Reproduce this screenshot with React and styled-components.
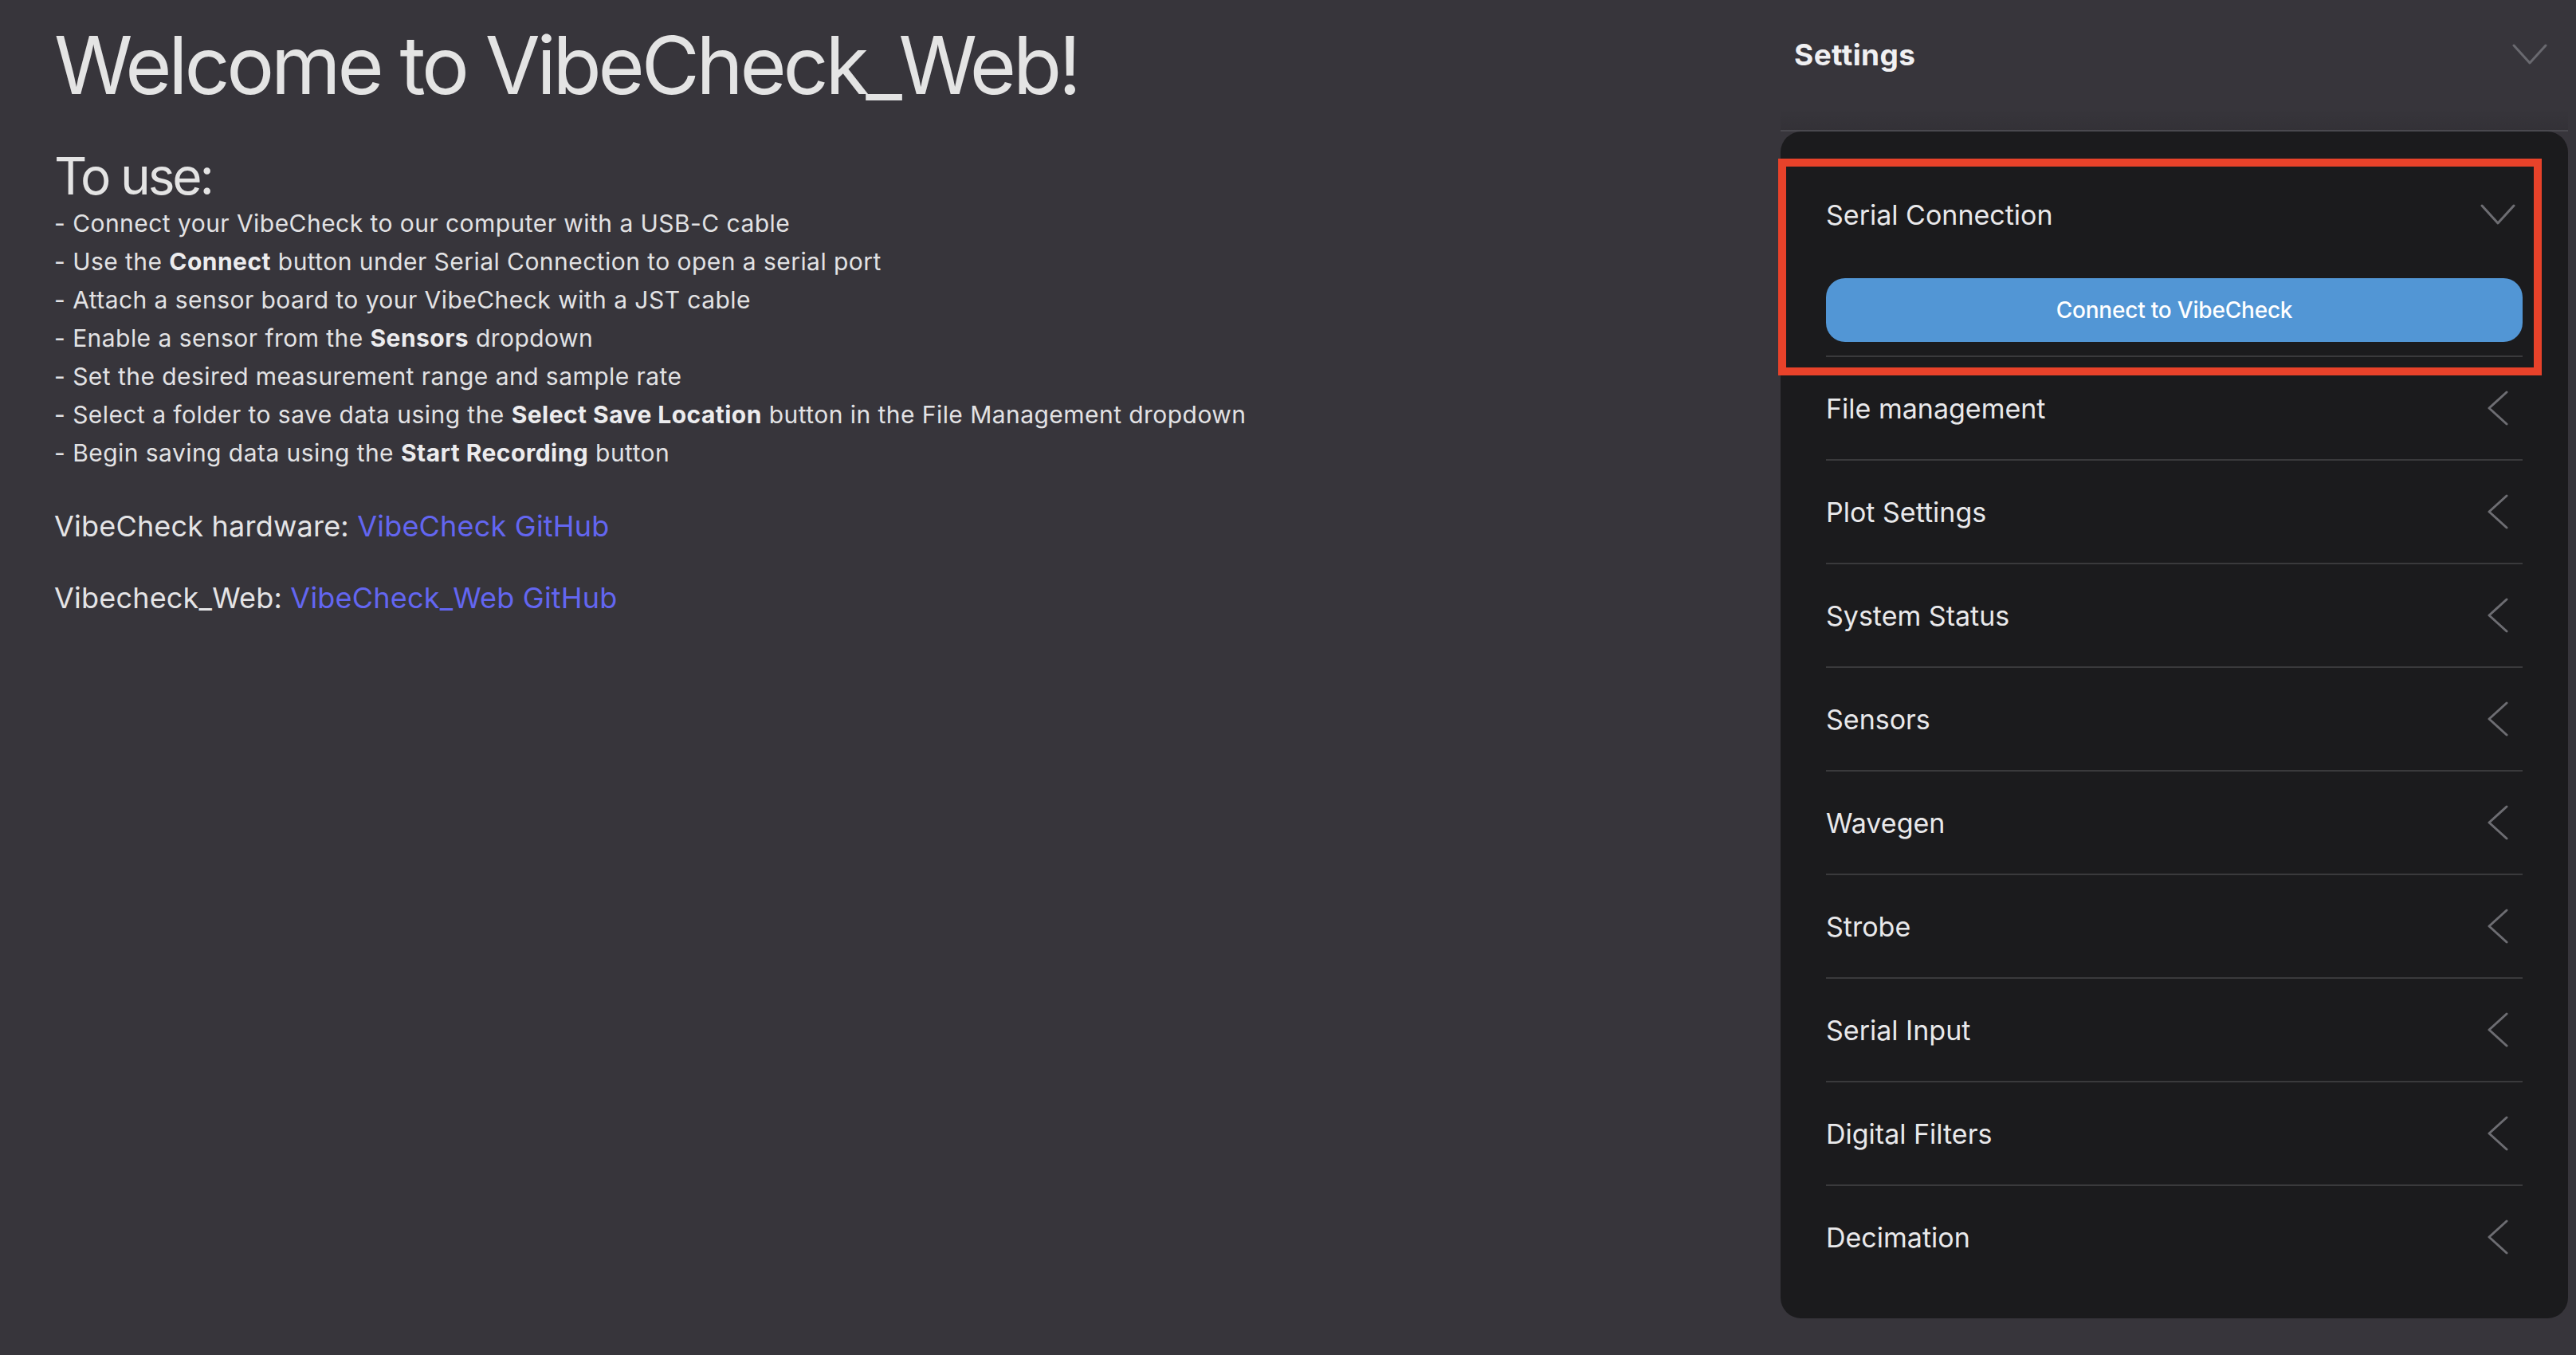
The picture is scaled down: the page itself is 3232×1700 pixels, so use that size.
import React from "react";
import styled, { createGlobalStyle } from "styled-components";

const GlobalStyle = createGlobalStyle`
  html, body {
    margin: 0;
    padding: 0;
    background: #37353b;
  }
  body {
    font-family: Inter, "Noto Sans", sans-serif;
    color: #e4e4e6;
  }
`;

const Page = styled.div`
  display: flex;
  width: 3232px;
  height: 1700px;
  box-sizing: border-box;
  padding-right: 10px;
  overflow: hidden;
`;

const Main = styled.main`
  flex: 1;
  display: flex;
  flex-direction: column;
  padding-left: 68px;
`;

const Title = styled.h1`
  margin: 22px 0 0;
  font-size: 100px;
  line-height: 120px;
  font-weight: 400;
  letter-spacing: -4.2px;
  color: #e4e4e4;
`;

const Subtitle = styled.h2`
  margin: 44px 0 0;
  font-size: 64px;
  line-height: 70px;
  font-weight: 400;
  letter-spacing: -3.2px;
  color: #e4e4e4;
`;

const Steps = styled.div`
  display: flex;
  flex-direction: column;
`;

const Step = styled.div`
  font-size: 30px;
  line-height: 48px;
  letter-spacing: 0.45px;
  color: #e2e2e4;

  b {
    font-weight: 700;
    color: #ececee;
  }
`;

const LinkLine = styled.p`
  margin: ${({ $first }) => ($first ? "41px" : "36px")} 0 0;
  font-size: 36px;
  line-height: 54px;
  letter-spacing: 0.2px;
  color: #e4e4e6;
`;

const Link = styled.a`
  color: #6366f1;
  text-decoration: none;
`;

const Sidebar = styled.aside`
  width: 988px;
  display: flex;
  flex-direction: column;
`;

const Header = styled.div`
  display: flex;
  flex-direction: column;
  border-bottom: 2px solid #4a494f;
`;

const Toolbar = styled.div`
  height: 136px;
  display: flex;
  align-items: center;
  justify-content: space-between;
  padding: 0 26px 0 17px;
`;

const ToolbarTitle = styled.span`
  font-size: 37px;
  font-weight: 700;
  letter-spacing: 0.4px;
  color: #f0f0f2;
`;

const Fade = styled.div`
  height: 27px;
  background: linear-gradient(to bottom, rgba(0, 0, 0, 0), rgba(0, 0, 0, 0.07));
`;

const Panel = styled.div`
  position: relative;
  display: flex;
  flex-direction: column;
  background: #1b1b1d;
  border-radius: 26px;
  padding: 40px 57px 38px;
`;

const Highlight = styled.div`
  position: absolute;
  left: -3px;
  top: 34px;
  width: 958px;
  height: 272px;
  box-sizing: border-box;
  border: 10px solid #e8422a;
  pointer-events: none;
`;

const Row = styled.div`
  height: 128px;
  display: flex;
  align-items: center;
  justify-content: space-between;
  padding-right: 9px;
  border-bottom: ${({ $divider }) => ($divider ? "2px solid #3a3a3c" : "none")};
`;

const Label = styled.span`
  font-size: 34px;
  color: #e9e9eb;
`;

const IconBox = styled.span`
  width: 44px;
  height: 44px;
  display: flex;
  align-items: center;
  justify-content: center;
`;

const Section = styled.div`
  display: flex;
  flex-direction: column;
`;

const SectionBody = styled.div`
  padding: 16px 0 17px;
  border-bottom: 2px solid #3a3a3c;
`;

const Button = styled.button`
  width: 100%;
  height: 80px;
  border: none;
  border-radius: 24px;
  background: #5296d5;
  color: #ffffff;
  font-family: Inter, "Noto Sans", sans-serif;
  font-size: 28px;
  font-weight: 500;
  letter-spacing: -0.2px;
`;

const ChevronDown = ({ color = "#6d6d72" }) => (
  <IconBox>
    <svg width="44" height="44" viewBox="0 0 44 44" fill="none">
      <polyline
        points="2,11 22,33 42,11"
        stroke={color}
        strokeWidth="3"
        strokeLinecap="round"
        strokeLinejoin="round"
      />
    </svg>
  </IconBox>
);

const ChevronBack = () => (
  <IconBox>
    <svg width="44" height="44" viewBox="0 0 44 44" fill="none">
      <polyline
        points="33,2 11,22 33,42"
        stroke="#6d6d72"
        strokeWidth="3"
        strokeLinecap="round"
        strokeLinejoin="round"
      />
    </svg>
  </IconBox>
);

const sections = [
  "File management",
  "Plot Settings",
  "System Status",
  "Sensors",
  "Wavegen",
  "Strobe",
  "Serial Input",
  "Digital Filters",
  "Decimation",
];

const App = () => {
  return (
    <>
      <GlobalStyle />
      <Page>
        <Main>
          <Title>Welcome to VibeCheck_Web!</Title>
          <Subtitle>To use:</Subtitle>
          <Steps>
            <Step>- Connect your VibeCheck to our computer with a USB-C cable</Step>
            <Step>
              - Use the <b>Connect</b> button under Serial Connection to open a serial port
            </Step>
            <Step>- Attach a sensor board to your VibeCheck with a JST cable</Step>
            <Step>
              - Enable a sensor from the <b>Sensors</b> dropdown
            </Step>
            <Step>- Set the desired measurement range and sample rate</Step>
            <Step>
              - Select a folder to save data using the <b>Select Save Location</b> button in the File
              Management dropdown
            </Step>
            <Step>
              - Begin saving data using the <b>Start Recording</b> button
            </Step>
          </Steps>
          <LinkLine $first>
            VibeCheck hardware: <Link href="#">VibeCheck GitHub</Link>
          </LinkLine>
          <LinkLine>
            Vibecheck_Web: <Link href="#">VibeCheck_Web GitHub</Link>
          </LinkLine>
        </Main>

        <Sidebar>
          <Header>
            <Toolbar>
              <ToolbarTitle>Settings</ToolbarTitle>
              <ChevronDown color="#69696f" />
            </Toolbar>
            <Fade />
          </Header>
          <Panel>
            <Section>
              <Row>
                <Label>Serial Connection</Label>
                <ChevronDown />
              </Row>
              <SectionBody>
                <Button>Connect to VibeCheck</Button>
              </SectionBody>
            </Section>
            {sections.map((name, i) => (
              <Row key={name} $divider={i < sections.length - 1}>
                <Label>{name}</Label>
                <ChevronBack />
              </Row>
            ))}
            <Highlight />
          </Panel>
        </Sidebar>
      </Page>
    </>
  );
};

export default App;
